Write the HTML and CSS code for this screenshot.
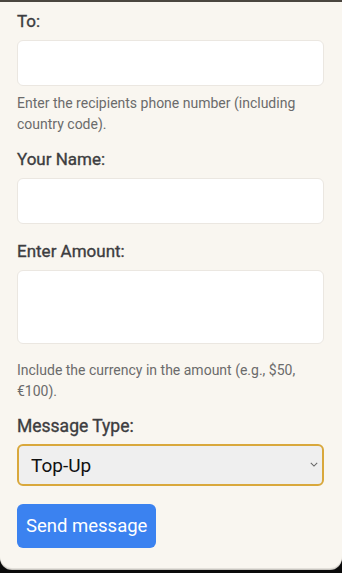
FILE: index.html
```html
<!DOCTYPE html>
<html lang="en">
<head>
    <meta charset="UTF-8">
    <meta name="viewport" content="width=device-width, initial-scale=1.0">
    <title>Send Message</title>
    <link rel="stylesheet" href="styles.css">
</head>
<body>
    <div class="card">
        <form class="form" onsubmit="return false;">
            <label class="label" for="to">To:</label>
            <input class="field" type="text" id="to">
            <p class="help help-first">Enter the recipients phone number (including country code).</p>

            <label class="label" for="name">Your Name:</label>
            <input class="field" type="text" id="name">

            <label class="label label-gap" for="amount">Enter Amount:</label>
            <textarea class="field area" id="amount"></textarea>
            <p class="help help-second">Include the currency in the amount (e.g., $50, €100).</p>

            <label class="label label-type" for="type">Message Type:</label>
            <div class="select-wrap">
                <select class="select" id="type">
                    <option>Top-Up</option>
                    <option>Greeting</option>
                </select>
                <svg class="chevron" viewBox="0 0 10 6">
                    <path d="M1 1l4 4 4-4"/>
                </svg>
            </div>

            <button class="button" type="submit">Send message</button>
        </form>
    </div>
</body>
</html>
```

FILE: styles.css
```css
* {
    margin: 0;
    padding: 0;
    box-sizing: border-box;
}

body {
    font-family: Roboto, "Noto Sans", Arial, sans-serif;
    background: #0b0b0b;
    min-height: 100vh;
}

.card {
    background: #f9f6f0;
    border-top: 2px solid #4b4640;
    border-radius: 0 0 12px 12px;
    height: 568px;
    box-shadow: 0 1px 0 #e3e0da, 0 2px 0 #c9c6c0;
}

.form {
    padding: 7px 18px 0 17px;
}

.label {
    display: block;
    font-size: 17px;
    font-weight: 400;
    -webkit-text-stroke: 0.35px #3d3d40;
    line-height: 24px;
    color: #3d3d40;
    margin-bottom: 7px;
}

.label-gap {
    margin-top: 15px;
}

.label-type {
    font-size: 17.5px;
    margin-top: 13px;
    margin-bottom: 6px;
}

.field {
    display: block;
    width: 100%;
    height: 46px;
    background: #fff;
    border: 1px solid #ebe7e1;
    border-radius: 6px;
    font-family: inherit;
    font-size: 16px;
    padding: 0 12px;
    outline: none;
}

.area {
    height: 74px;
    resize: none;
    padding: 10px 12px;
}

.help {
    font-size: 14px;
    line-height: 20.5px;
    color: #6b6b6b;
}

.help-first {
    margin: 7px 0 13px;
}

.help-second {
    margin: 16px 0 0;
}

.select-wrap {
    position: relative;
}

.select {
    display: block;
    width: 100%;
    height: 42px;
    appearance: none;
    -webkit-appearance: none;
    background: #efefef;
    border: 2px solid #d9a83c;
    border-radius: 6px;
    font-family: inherit;
    font-size: 19px;
    color: #111;
    padding: 0 12px;
    outline: none;
}

.chevron {
    position: absolute;
    right: 6px;
    top: 18px;
    width: 8px;
    height: 5px;
    fill: none;
    stroke: #666;
    stroke-width: 1.3;
}

.button {
    display: inline-block;
    margin-top: 18px;
    height: 44px;
    padding: 0 9px;
    background: #3b82f0;
    color: #fff;
    border: none;
    border-radius: 6px;
    font-family: inherit;
    font-size: 18.5px;
    cursor: pointer;
}
```
